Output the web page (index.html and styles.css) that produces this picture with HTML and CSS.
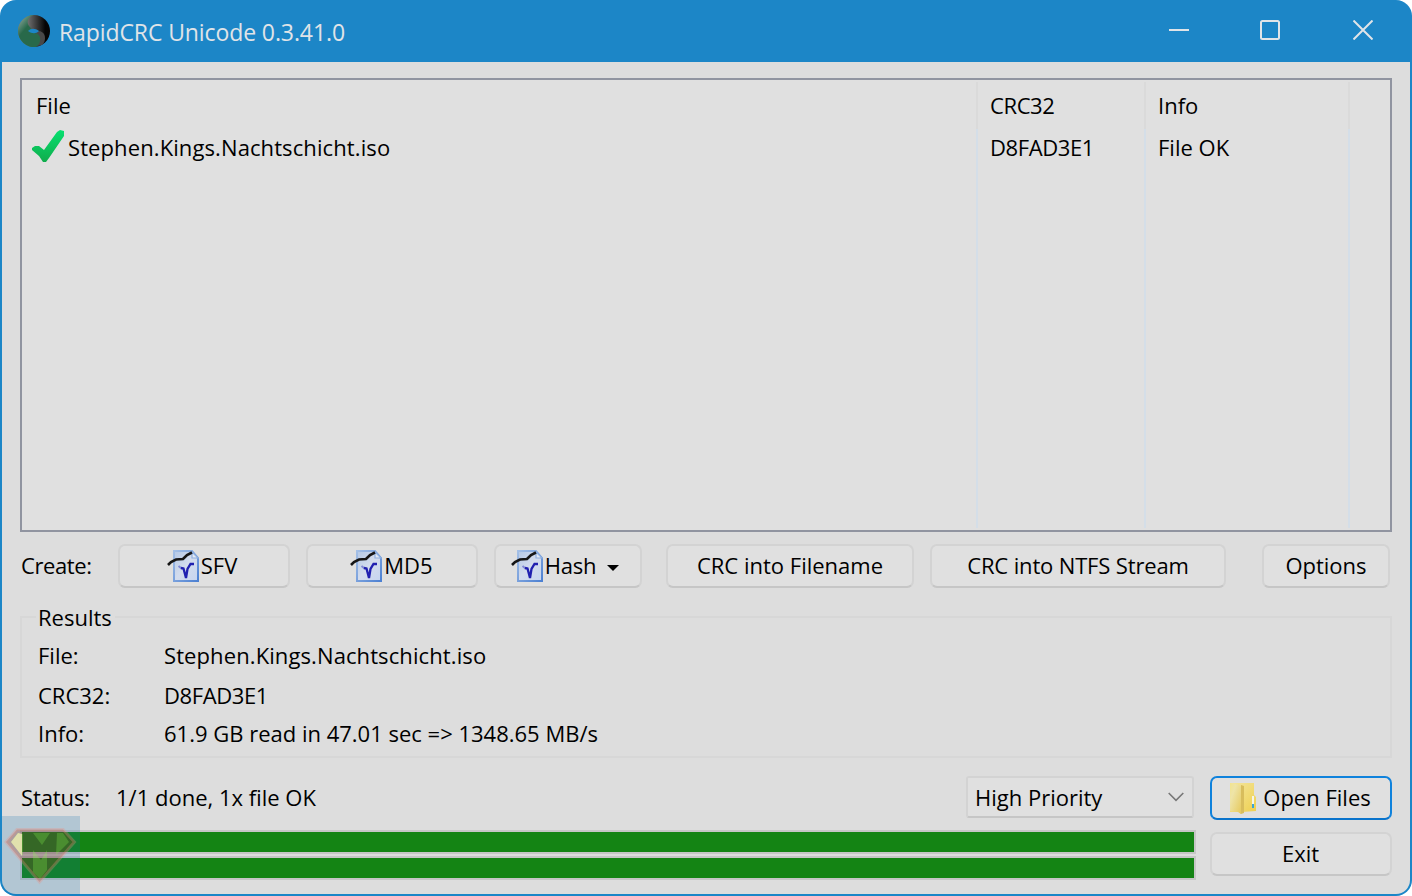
FILE: index.html
```
<!DOCTYPE html>
<html lang="en">

<head>
    <meta charset="UTF-8">
    <meta name="viewport" content="width=device-width, initial-scale=1.0">
    <title>RapidCRC Unicode 0.3.41.0</title>
    <link rel="stylesheet" href="styles.css">
</head>

<body>
    <svg class="defs" width="0" height="0">
        <defs>
            <linearGradient id="paper" x1="0" y1="0" x2="1" y2="1">
                <stop offset="0" stop-color="#b4c8e6" />
                <stop offset="0.5" stop-color="#d3dced" />
                <stop offset="1" stop-color="#c6d5f0" />
            </linearGradient>
            <linearGradient id="paperEdge" x1="0" y1="0" x2="1" y2="1">
                <stop offset="0" stop-color="#a5c0e6" />
                <stop offset="1" stop-color="#4c80d2" />
            </linearGradient>
        </defs>
        <symbol id="docIcon" viewBox="0 0 32 32">
            <path d="M7 1h18l6 7v23H7z" fill="url(#paper)" stroke="url(#paperEdge)" stroke-width="2" />
            <path d="M25 2v6h6z" fill="#e4e9f2" stroke="#8fb0e0" stroke-width="1.2" />
            <path d="M11.500 16l3 2.500" fill="none" stroke="#8088d4" stroke-width="2" />
            <path d="M14 18l2.500.5L19 28l1.500-9 3-5H27" fill="none" stroke="#2020b0" stroke-width="2.3" />
            <path d="M1 15l3-3 5-2.500 7-.5 4-4 5-2.500" fill="none" stroke="#161616" stroke-width="2.600" />
        </symbol>
    </svg>

    <div class="window">
        <div class="titlebar">
            <svg class="app-icon" viewBox="0 0 32 32">
                <defs>
                    <linearGradient id="dark">
                        <stop offset="0.3" stop-color="#707070" />
                        <stop offset="0.85" stop-color="#050505" />
                    </linearGradient>
                    <linearGradient id="green" x1="0" y1="0" x2="0.5" y2="0.6">
                        <stop offset="0.1" stop-color="#8fa89e" />
                        <stop offset="0.7" stop-color="#28694a" />
                    </linearGradient>
                </defs>
                <circle cx="16" cy="16" r="16" fill="url(#dark)" />
                <path d="M17 16c6-1 10 2 10 7 0 3-1 5-3 7l-6 1z" fill="#484848" />
                <path d="M16 0C9 2 8 9 12 12l5 6c4 1 6 4 5 8-.5 3-2 4-4 6A16 16 0 0 1 0 16 16 16 0 0 1 16 0z" fill="url(#green)" />
                <path d="M10 16c3-3 7-3 11 0-3 3-7 3-11 0z" fill="#1c86c7" />
            </svg>
            <span class="title">RapidCRC Unicode 0.3.41.0</span>
            <div class="controls">
                <svg viewBox="0 0 20 20"><path d="M0 10h20" /></svg>
                <svg viewBox="0 0 20 20"><rect x="1" y="1" width="18" height="18" rx="1.5" /></svg>
                <svg viewBox="0 0 20 20"><path d="M.5.5l19 19M19.5.5l-19 19" /></svg>
            </div>
        </div>

        <div class="content">
            <div class="file-list">
                <div class="column">
                    <div class="head"><span>File</span></div>
                    <div class="cell first">
                        <svg class="check" viewBox="0 0 32 32">
                            <defs>
                                <linearGradient id="tick" x1="0" y1="0" x2="0" y2="1">
                                    <stop offset="0" stop-color="#06e070" />
                                    <stop offset="1" stop-color="#10ac4c" />
                                </linearGradient>
                            </defs>
                            <path d="M0 18l3-2h4l5 4L25 2l3-2 4 1v5L17 28l-3 4h-3L7 26 0 20z" fill="url(#tick)" />
                        </svg>
                        <span class="file-name">Stephen.Kings.Nachtschicht.iso</span>
                    </div>
                </div>
                <div class="column">
                    <div class="head"><span class="caps">CRC32</span></div>
                    <div class="cell"><span class="caps">D8FAD3E1</span></div>
                </div>
                <div class="column">
                    <div class="head"><span>Info</span></div>
                    <div class="cell"><span>File OK</span></div>
                </div>
            </div>

            <div class="toolbar">
                <span class="create-label">Create:</span>
                <button class="btn sfv"><svg class="doc"><use href="#docIcon" /></svg><span>SFV</span></button>
                <button class="btn md5"><svg class="doc"><use href="#docIcon" /></svg><span>MD5</span></button>
                <button class="btn hash"><svg class="doc"><use href="#docIcon" /></svg><span>Hash</span><i class="arrow"></i></button>
                <button class="btn crc-name"><span>CRC into Filename</span></button>
                <button class="btn crc-ntfs"><span>CRC into NTFS Stream</span></button>
                <button class="btn options"><span>Options</span></button>
            </div>

            <fieldset class="results">
                <legend>Results</legend>
                <dl>
                    <dt>File:</dt>
                    <dd class="file-name">Stephen.Kings.Nachtschicht.iso</dd>
                    <dt>CRC32:</dt>
                    <dd class="caps">D8FAD3E1</dd>
                    <dt>Info:</dt>
                    <dd>61.9 GB read in 47.01 sec =&gt; 1348.65 MB/s</dd>
                </dl>
            </fieldset>

            <div class="footer">
                <div class="progress-area">
                    <div class="status">
                        <span class="status-label">Status:</span>
                        <span class="status-text">1/1 done, 1x file OK</span>
                        <div class="select">
                            <span>High Priority</span>
                            <svg viewBox="0 0 16 10"><path d="M.7 1L8 8.3 15.3 1" /></svg>
                        </div>
                    </div>
                    <div class="bar"></div>
                    <div class="bar"></div>
                </div>
                <div class="actions">
                    <button class="btn open">
                        <svg class="folder" viewBox="0 0 26 32">
                            <defs>
                                <linearGradient id="back" x1="0" y1="0" x2="1" y2="1">
                                    <stop offset="0" stop-color="#f3e6a0" />
                                    <stop offset="1" stop-color="#efd050" />
                                </linearGradient>
                                <linearGradient id="flap" x1="0" y1="0" x2="1" y2="1">
                                    <stop offset="0" stop-color="#f2e48e" />
                                    <stop offset="0.3" stop-color="#eee4a8" />
                                    <stop offset="1" stop-color="#e6c95c" />
                                </linearGradient>
                            </defs>
                            <path d="M0 1h24v12l2 2v14l-14 1H0z" fill="url(#back)" />
                            <path d="M11 3l3 1v27l-3 1-2-2z" fill="#d8bd5c" />
                            <path d="M0 1l9 2 2 3v26l-3-2-8-1z" fill="url(#flap)" />
                            <path d="M23 14v8" stroke="#f4f4ea" stroke-width="2" />
                            <path d="M23 22v4" stroke="#3aa5d8" stroke-width="2" />
                        </svg>
                        <span>Open Files</span>
                    </button>
                    <button class="btn exit"><span>Exit</span></button>
                </div>
            </div>
        </div>

        <svg class="badge" viewBox="0 0 80 80">
            <rect x="2" width="78" height="80" fill="#0a6db0" fill-opacity="0.2" />
            <path d="M17 13.500h46L74.500 26 39.500 66 6 26z" fill="#a02000" fill-opacity="0.25" />
            <path d="M17 13.500h46L74.500 26 39.500 66 6 26z" fill="none" stroke="#f09080" stroke-opacity="0.3" stroke-width="3" />
            <path d="M23 18v22L11 26l7-9zM57 17h6l6 9-13 13zM33 17h17l-8 12zM33 34l8 10 6-10v20l-7 9-7-7z" fill="#8cff50" fill-opacity="0.25" />
            <path d="M18 17l4 1v22L11 26z" fill="#f6f0b8" fill-opacity="0.75" />
        </svg>
    </div>
</body>

</html>
```
FILE: styles.css
```
* {
    box-sizing: border-box;
}

body {
    margin: 0;
    background: #fff;
    color: #000;
    font-family: "Open Sans", "Noto Sans", sans-serif;
    font-size: 22px;
    line-height: 30px;
    white-space: nowrap;
}

.defs {
    position: absolute;
}

.window {
    position: relative;
    width: 1412px;
    height: 896px;
    display: flex;
    flex-direction: column;
    padding: 0 2px 2px;
    background: #1c86c7;
    border-radius: 16px;
    overflow: hidden;
}

.titlebar {
    height: 62px;
    display: flex;
    align-items: center;
    padding: 0 37px 0 16px;
    color: #e0e4e8;
}

.app-icon {
    width: 32px;
    height: 32px;
    margin-right: 9px;
}

.title {
    font-size: 23px;
    letter-spacing: -0.1px;
    padding-top: 2px;
}

.controls {
    display: flex;
    margin: 0 0 2px auto;
}

.controls svg {
    width: 20px;
    height: 20px;
    margin-left: 73px;
    fill: none;
    stroke: #e0e4e8;
    stroke-width: 2;
}

.controls svg:nth-child(2) {
    margin-left: 71px;
}

.content {
    flex: 1;
    padding: 16px 18px 0;
    background: #ddd;
    border-radius: 0 0 14px 14px;
}

.file-list {
    height: 454px;
    display: grid;
    grid-template-columns: 956px 168px 204px;
    padding: 2px 0;
    background: #e0e0e0;
    border: 2px solid #9094a0;
}

.column {
    border-right: 2px solid #d4dee8;
    border-image: linear-gradient(#dadada 48px, #d4dee8 48px) 1;
    border-width: 0 2px 0 0;
}

.head {
    height: 48px;
    padding: 8px 12px 0;
}

.cell {
    display: flex;
    padding: 2px 12px 0;
}

.column:first-child .head {
    padding-left: 14px;
}

.first {
    padding-left: 10px;
}

.check {
    width: 32px;
    height: 32px;
    margin-right: 4px;
    margin-top: -2px;
}

.file-name {
    letter-spacing: 0.1px;
}

.caps {
    letter-spacing: -0.4px;
}

.toolbar {
    display: flex;
    align-items: center;
    margin-top: 12px;
}

.toolbar span {
    padding-bottom: 2px;
}

.create-label {
    width: 98px;
    padding-left: 1px;
    letter-spacing: -0.4px;
}

.btn {
    height: 44px;
    display: flex;
    align-items: center;
    justify-content: center;
    padding: 0;
    font: inherit;
    color: #000;
    background: #e0e0e0;
    border: 2px solid #d3d3d3;
    border-bottom-color: #c6c6c6;
    border-radius: 7px;
}

.doc {
    width: 32px;
    height: 32px;
    margin-right: 2px;
}

.sfv,
.md5 {
    width: 172px;
    margin-right: 16px;
    padding-right: 1px;
}

.sfv {
    padding-right: 4px;
}

.hash {
    width: 148px;
    margin-right: 24px;
    padding-right: 6px;
}

.hash span {
    letter-spacing: -0.2px;
}

.arrow {
    margin: 3px 0 0 11px;
    border: 6px solid transparent;
    border-top-color: #000;
    border-bottom: 0;
}

.crc-name {
    width: 248px;
    margin-right: 16px;
}

.crc-ntfs {
    width: 296px;
    margin-right: 36px;
    letter-spacing: -0.15px;
}

.options {
    width: 128px;
}

.results {
    height: 156px;
    margin: 14px 0 0;
    padding: 0 16px;
    border: 2px solid #d7d7d7;
    min-width: 0;
}

.results legend {
    margin-left: -2px;
    padding: 0 3px 0 2px;
}

.results dl {
    display: grid;
    grid-template-columns: 126px 1fr;
    grid-template-rows: 40px 38px 30px;
    margin: 8px 0 0;
}

.results dd {
    margin: 0;
}

.footer {
    display: flex;
    justify-content: space-between;
    margin-top: 18px;
}

.progress-area {
    width: 1176px;
}

.status {
    height: 44px;
    display: flex;
    align-items: center;
    margin-bottom: 10px;
}

.status > span {
    padding-bottom: 2px;
}

.status-label {
    width: 96px;
    padding-left: 1px;
    letter-spacing: -0.1px;
}

.select {
    width: 228px;
    height: 42px;
    display: flex;
    align-items: center;
    justify-content: space-between;
    margin: 0 2px 2px auto;
    padding: 0 8px 0 7px;
    background: #e0e0e0;
    border: 2px solid #d3d3d3;
    border-bottom-color: #c6c6c6;
    border-radius: 3px;
}

.select svg {
    width: 16px;
    height: 10px;
    fill: none;
    stroke: #777;
    stroke-width: 1.6;
}

.bar {
    height: 24px;
    margin-bottom: 2px;
    background: #148414;
    border: 2px solid #c6c6c6;
}

.actions {
    width: 182px;
    display: flex;
    flex-direction: column;
    gap: 12px;
}

.actions span {
    padding-bottom: 2px;
}

.open {
    padding-right: 1px;
    border-color: #0f82dc;
    border-bottom-color: #0a74cc;
}

.exit {
    padding-right: 1px;
}

.folder {
    width: 26px;
    height: 32px;
    margin-right: 7px;
}

.badge {
    position: absolute;
    left: 0;
    bottom: 0;
    width: 80px;
    height: 80px;
}
```
